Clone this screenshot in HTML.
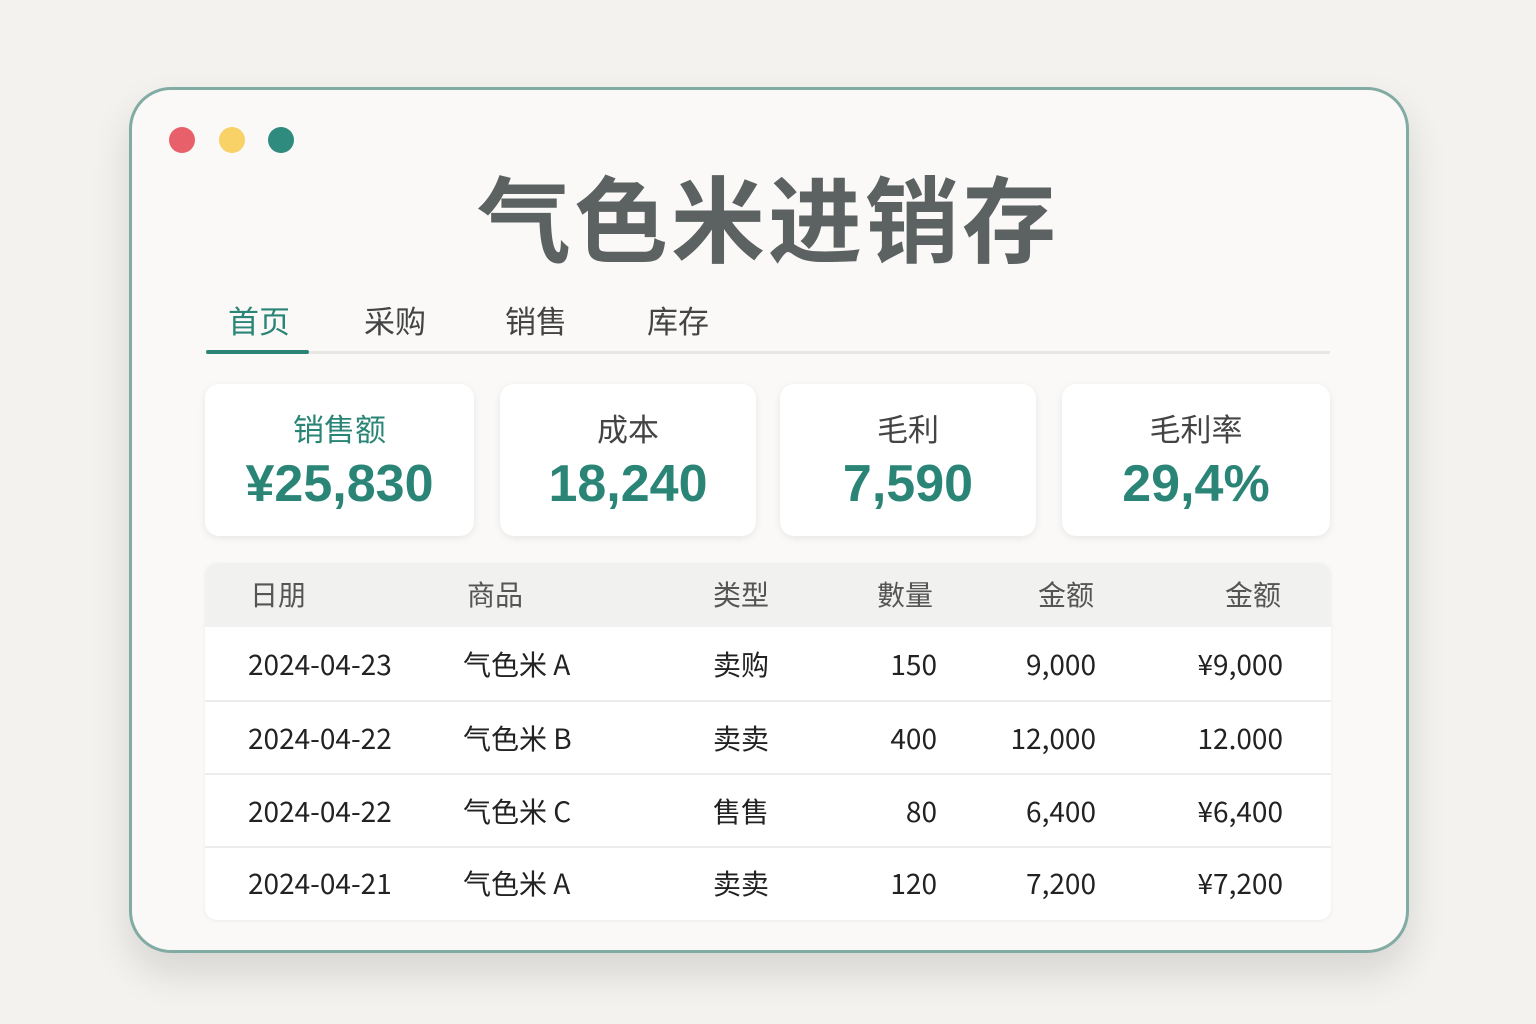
<!DOCTYPE html>
<html><head><meta charset="utf-8"><style>
*{margin:0;padding:0;box-sizing:border-box}
body{width:1536px;height:1024px;background:#f3f2ef;position:relative;overflow:hidden;font-family:"Liberation Sans","Noto Sans CJK SC",sans-serif}
.win{position:absolute;left:129px;top:87px;width:1280px;height:866px;border:3px solid #82aba3;border-radius:42px;background:#faf9f7;box-shadow:0 20px 40px rgba(0,0,0,0.12)}
.dot{position:absolute;top:127px;width:26px;height:26px;border-radius:50%}
.a{position:absolute;white-space:nowrap}
.title{left:0;width:1536px;text-align:center;top:150px;font-size:94px;line-height:130px;font-weight:bold;color:#5b6261;letter-spacing:3px;font-family:"Noto Sans CJK SC",sans-serif}
.tab{top:300px;font-size:31px;line-height:40px;color:#444;font-family:"Noto Sans CJK SC",sans-serif}
.card{position:absolute;top:384px;height:152px;background:#fff;border-radius:14px;box-shadow:0 2px 8px rgba(0,0,0,0.08);text-align:center}
.card .l{margin-top:24px;font-size:31px;color:#444;line-height:40px;font-family:"Noto Sans CJK SC",sans-serif}
.card .v{font-size:52px;font-weight:bold;color:#2a8577;line-height:60px;margin-top:6px}
.tbl{position:absolute;left:205px;top:563px;width:1126px;height:357px;background:#fff;border-radius:12px;box-shadow:0 1px 4px rgba(0,0,0,0.06);overflow:hidden}
.hd{position:absolute;left:0;top:0;width:100%;height:64px;background:#f1f1ef}
.row{position:absolute;left:0;width:100%;border-top:2px solid #ececea}
.c{position:absolute;font-size:28px;line-height:40px;color:#222;white-space:nowrap;font-family:"Noto Sans CJK SC",sans-serif}
.h{color:#555;font-size:28px}
.r{text-align:right}
</style></head><body>
<div class="win"></div>
<div class="dot" style="left:169px;background:#e8606a"></div>
<div class="dot" style="left:219px;background:#f8d266"></div>
<div class="dot" style="left:268px;background:#2f8b7e"></div>
<div class="a title">气色米进销存</div>
<div class="a tab" style="left:228px;color:#2a8577">首页</div>
<div class="a tab" style="left:364px">采购</div>
<div class="a tab" style="left:505px">销售</div>
<div class="a tab" style="left:647px">库存</div>
<div class="a" style="left:206px;top:351px;width:1124px;height:3px;background:#e6e6e3"></div>
<div class="a" style="left:206px;top:350px;width:103px;height:4px;background:#2a8577;border-radius:2px"></div>
<div class="card" style="left:205px;width:269px"><div class="l" style="color:#2a8577">销售额</div><div class="v">¥25,830</div></div>
<div class="card" style="left:500px;width:256px"><div class="l">成本</div><div class="v">18,240</div></div>
<div class="card" style="left:780px;width:256px"><div class="l">毛利</div><div class="v">7,590</div></div>
<div class="card" style="left:1062px;width:268px"><div class="l">毛利率</div><div class="v">29,4%</div></div>
<div class="tbl">
<div class="hd"></div>
<div class="c h" style="left:45px;top:11px">日朋</div>
<div class="c h" style="left:262px;top:11px">商品</div>
<div class="c h" style="left:508px;top:11px">类型</div>
<div class="c h r" style="right:398px;top:11px">數量</div>
<div class="c h r" style="right:237px;top:11px">金额</div>
<div class="c h r" style="right:50px;top:11px">金额</div>
<div class="row" style="top:137px"></div>
<div class="row" style="top:210px"></div>
<div class="row" style="top:283px"></div>
<div class="c" style="left:43px;top:81px">2024-04-23</div><div class="c" style="left:258px;top:81px">气色米 A</div><div class="c" style="left:508px;top:81px">卖购</div><div class="c r" style="right:394px;top:81px">150</div><div class="c r" style="right:235px;top:81px">9,000</div><div class="c r" style="right:48px;top:81px">¥9,000</div>
<div class="c" style="left:43px;top:155px">2024-04-22</div><div class="c" style="left:258px;top:155px">气色米 B</div><div class="c" style="left:508px;top:155px">卖卖</div><div class="c r" style="right:394px;top:155px">400</div><div class="c r" style="right:235px;top:155px">12,000</div><div class="c r" style="right:48px;top:155px">12.000</div>
<div class="c" style="left:43px;top:228px">2024-04-22</div><div class="c" style="left:258px;top:228px">气色米 C</div><div class="c" style="left:508px;top:228px">售售</div><div class="c r" style="right:394px;top:228px">80</div><div class="c r" style="right:235px;top:228px">6,400</div><div class="c r" style="right:48px;top:228px">¥6,400</div>
<div class="c" style="left:43px;top:300px">2024-04-21</div><div class="c" style="left:258px;top:300px">气色米 A</div><div class="c" style="left:508px;top:300px">卖卖</div><div class="c r" style="right:394px;top:300px">120</div><div class="c r" style="right:235px;top:300px">7,200</div><div class="c r" style="right:48px;top:300px">¥7,200</div>
</div>
</body></html>
